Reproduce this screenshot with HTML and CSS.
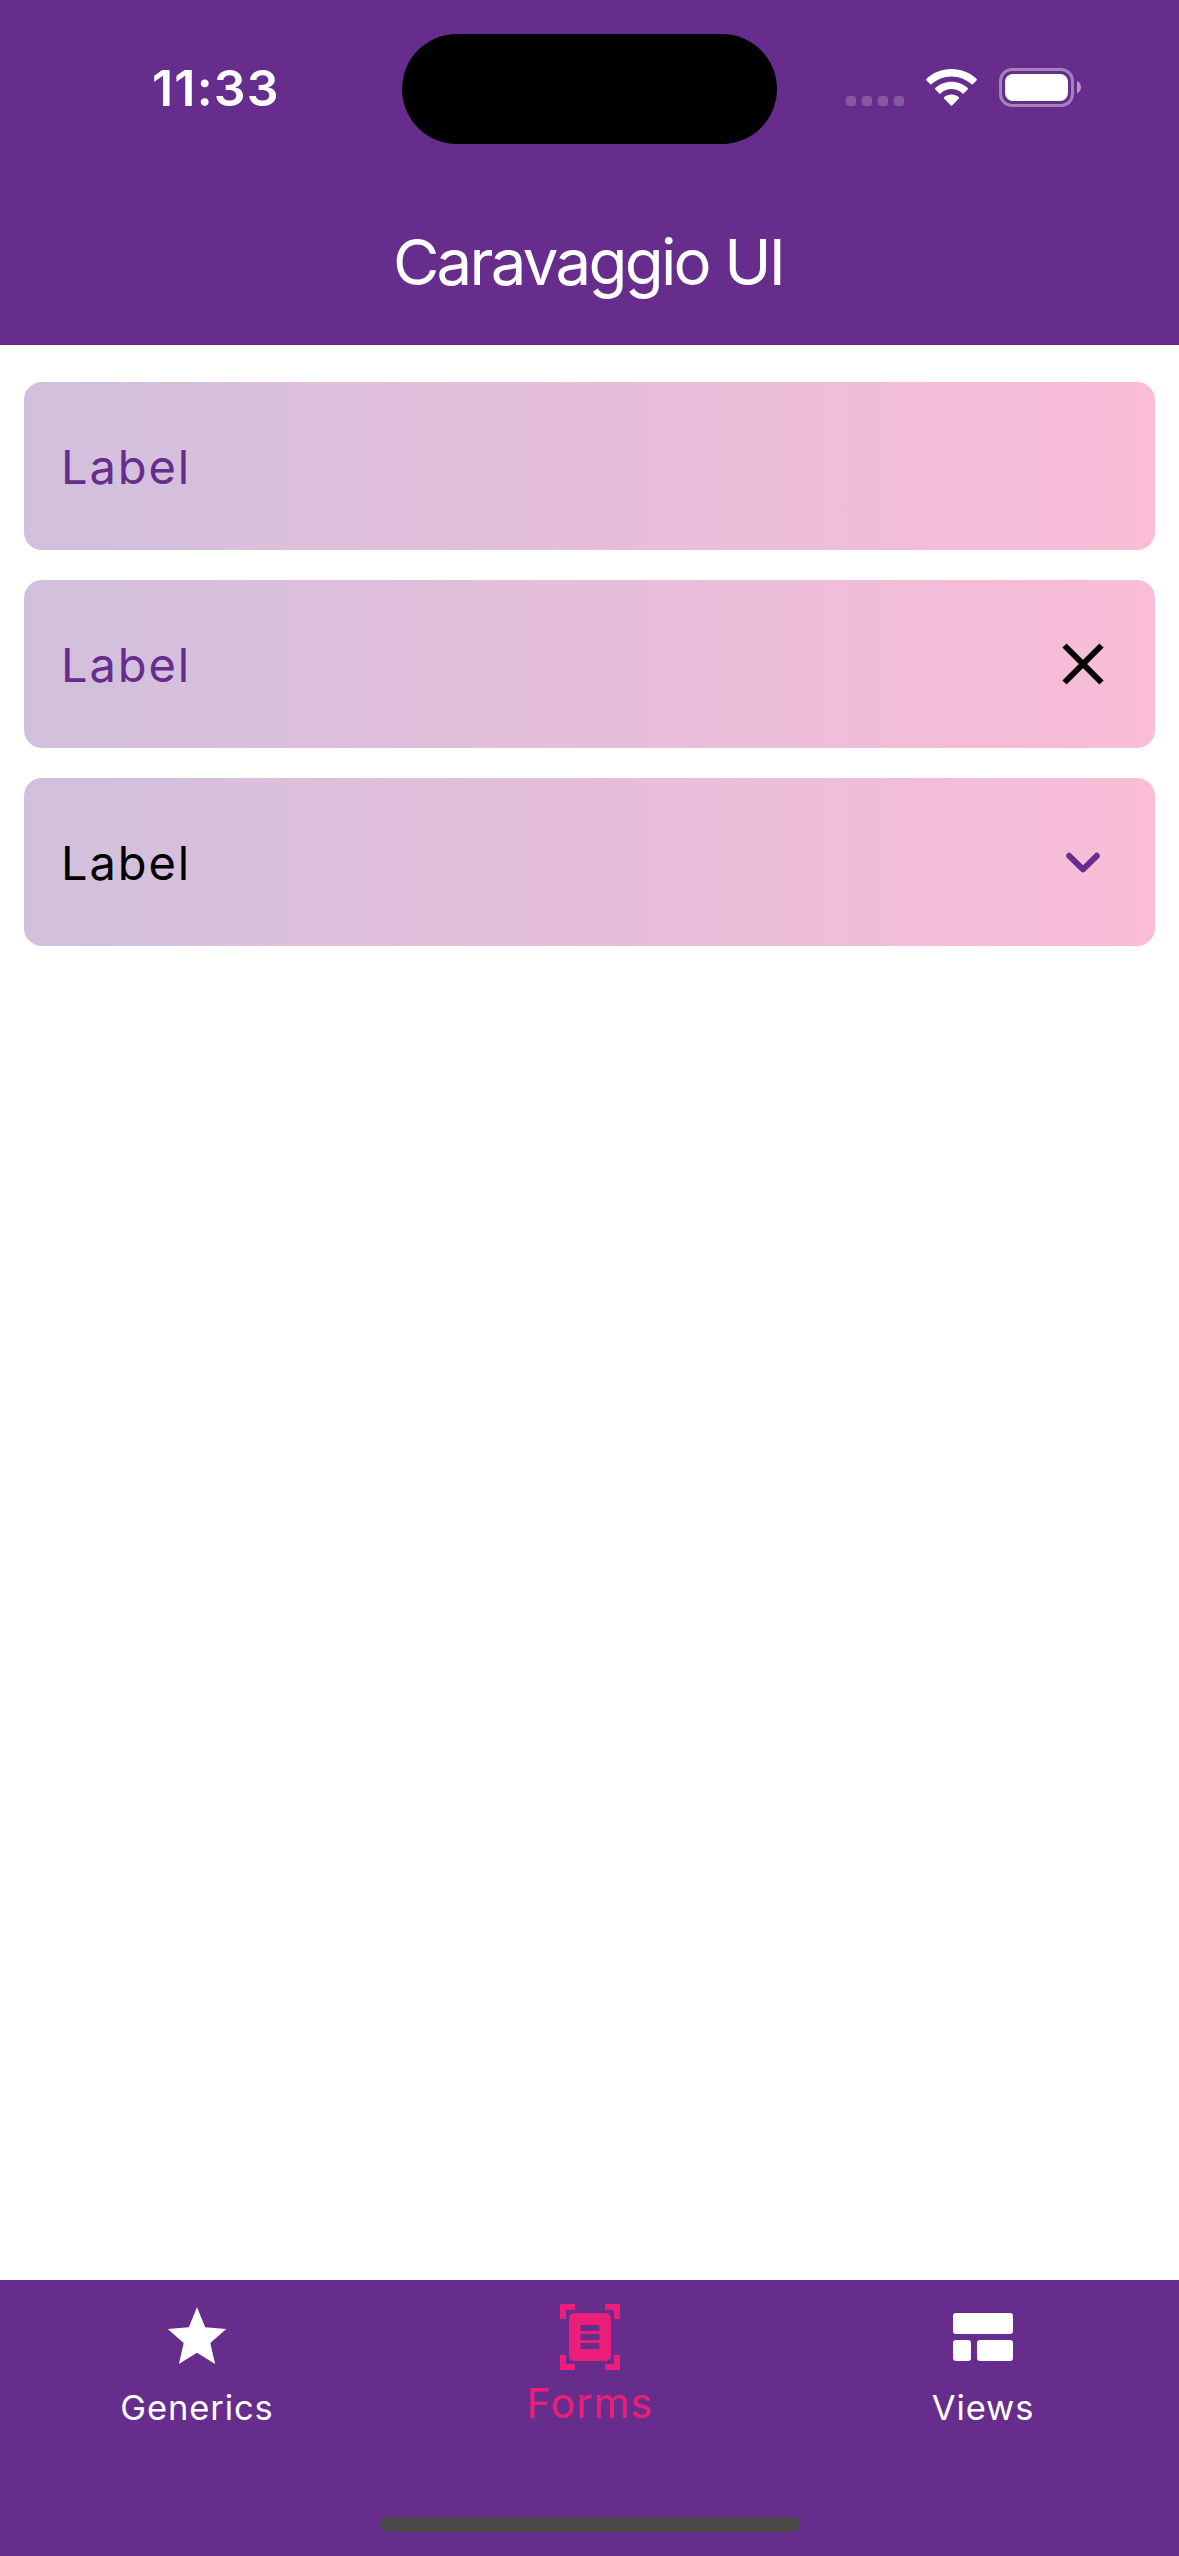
FILE: index.html
```html
<!DOCTYPE html>
<html lang="en">
<head>
<meta charset="utf-8">
<title>Caravaggio UI</title>
<link rel="stylesheet" href="styles.css">
</head>
<body>
<div class="screen">
  <header class="header">
    <div class="status">
      <div class="time">11:33</div>
      <div class="island"></div>
      <svg class="indicators" width="240" height="48" viewBox="844 64 240 48" fill="#fff" aria-hidden="true">
        <g opacity=".2"><rect x="846" y="96" width="10" height="10" rx="3"/><rect x="862" y="96" width="10" height="10" rx="3"/><rect x="878" y="96" width="10" height="10" rx="3"/><rect x="894" y="96" width="10" height="10" rx="3"/></g>
        <path d="M951.5 69C961.300 69 970.300 72.700 976.700 79Q977.200 79.600 976.700 80.200L972.700 84.200Q972.100 84.700 971.500 84.200C966 79.200 959.100 76.400 951.500 76.400S937 79.200 931.500 84.200Q930.900 84.700 930.300 84.200L926.300 80.200Q925.800 79.600 926.300 79C932.700 72.700 941.700 69 951.500 69Z"/>
        <path d="M951.500 81.700C957.800 81.700 963.500 84.100 967.800 88.100Q968.300 88.700 967.800 89.300L963.700 93.400Q963.100 93.900 962.500 93.400C959.600 90.700 955.700 89.100 951.500 89.100S943.400 90.700 940.500 93.400Q939.900 93.900 939.300 93.400L935.200 89.300Q934.700 88.700 935.200 88.100C939.500 84.100 945.200 81.700 951.500 81.700Z"/>
        <path d="M951.500 94.500C954.300 94.500 956.900 95.500 958.900 97.200Q959.500 97.800 958.900 98.400L952.100 105.500Q951.500 106.100 950.900 105.500L944.100 98.400Q943.500 97.800 944.100 97.200C946.100 95.500 948.700 94.500 951.500 94.500Z"/>
        <rect x="1000.500" y="69.500" width="72" height="36" rx="11.500" fill="none" stroke="#fff" stroke-width="3" opacity=".4"/>
        <rect x="1005" y="74" width="63" height="27" rx="8"/>
        <path d="M1077 81C1079.600 82.200 1081 84.600 1081 87.200S1079.600 92.200 1077 93.400Z" opacity=".5"/>
      </svg>
    </div>
    <h1 class="title">Caravaggio UI</h1>
  </header>
  <main class="fields">
    <div class="field"><span class="label">Label</span></div>
    <div class="field">
      <span class="label">Label</span>
      <svg width="72" height="72" viewBox="0 0 72 72" aria-hidden="true"><path d="M17.500 17.500L54.500 54.500M54.500 17.500L17.500 54.500" stroke="#000" stroke-width="6"/></svg>
    </div>
    <div class="field field-select">
      <span class="label">Label</span>
      <svg width="72" height="72" viewBox="0 0 72 72" aria-hidden="true"><path d="M22.200 29.800L36 43.400L49.800 29.800" fill="none" stroke="#662d8c" stroke-width="6" stroke-linecap="round" stroke-linejoin="round"/></svg>
    </div>
  </main>
  <nav class="tabs">
    <div class="tab">
      <svg width="72" height="72" viewBox="0 0 72 72" fill="currentColor" aria-hidden="true"><path d="M36 6.300L44.200 26.300L65.300 28L49.300 42L54.100 63L36 51.800L17.900 63L22.700 42L6.700 28L27.800 26.300Z"/></svg>
      <span class="tab-label">Generics</span>
    </div>
    <div class="tab tab-active">
      <svg width="72" height="72" viewBox="0 0 72 72" fill="currentColor" aria-hidden="true"><path d="M6 3H21V9H12V18H6ZM51 3H66V18H60V9H51ZM6 54H12V63H21V69H6ZM60 54H66V69H51V63H60Z"/><path fill-rule="evenodd" d="M21 12H51Q57 12 57 18V54Q57 60 51 60H21Q15 60 15 54V18Q15 12 21 12ZM26.500 24V30H45.500V24ZM26.500 33V39H45.500V33ZM26.500 42V48H45.500V42Z"/></svg>
      <span class="tab-label">Forms</span>
    </div>
    <div class="tab">
      <svg width="72" height="72" viewBox="0 0 72 72" fill="currentColor" aria-hidden="true"><rect x="6" y="12" width="60" height="21" rx="3"/><rect x="6" y="39" width="18" height="21" rx="3"/><rect x="30" y="39" width="36" height="21" rx="3"/></svg>
      <span class="tab-label">Views</span>
    </div>
    <div class="home-indicator"></div>
  </nav>
</div>
</body>
</html>
```
FILE: styles.css
```css
* { box-sizing: border-box; }
body { margin: 0; background: #fff; font-family: Inter, "Liberation Sans", sans-serif; }
svg { display: block; flex: none; }
.screen { display: flex; flex-direction: column; width: 1179px; height: 2556px; overflow: hidden; }
.header { height: 345px; background: #662d8c; color: #fff; }
.status { display: grid; grid-template-columns: 402px 375px 402px; height: 177px; padding-top: 34px; }
.time { padding: 24px 0 0 152px; font-size: 50px; line-height: 60px; font-weight: 600; letter-spacing: 1.2px; }
.island { height: 110px; border-radius: 55px; background: #000; }
.indicators { margin: 30px 0 0 67px; }
.title { margin: 0; padding: 45px 3px 0 0; text-align: center; font-size: 63.5px; line-height: 80px; font-weight: 400; letter-spacing: -2.7px; }
.fields { flex: 1; display: flex; flex-direction: column; gap: 30px; padding: 37px 24px; }
.field { display: flex; align-items: center; justify-content: space-between; height: 168px; padding: 0 36px 0 37px; border-radius: 18px; background: linear-gradient(90deg, #d1c0dd, #fabcd7); color: #662d8c; }
.field-select { color: #000; }
.label { font-size: 47px; line-height: 60px; letter-spacing: 1.9px; padding-top: 2px; }
.tabs { position: relative; display: grid; grid-template-columns: repeat(3, 1fr); height: 276px; padding-top: 21px; background: #662d8c; color: #fff; }
.tab { display: flex; flex-direction: column; align-items: center; }
.tab-label { margin: 11px 0 0 1px; font-size: 34.5px; line-height: 48px; letter-spacing: 0.9px; }
.tab-active { color: #ed1e79; }
.tab-active .tab-label { margin: 6px 0 0 1px; font-size: 41px; letter-spacing: 1.2px; }
.home-indicator { position: absolute; left: 380px; bottom: 24px; width: 420px; height: 15px; border-radius: 8px; background: #4a4a4a; }
```
